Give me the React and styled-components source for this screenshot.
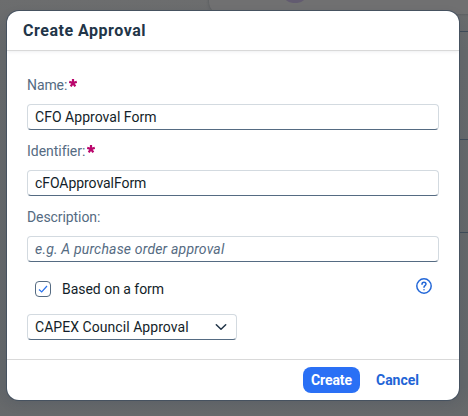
import React from "react";
import styled, { createGlobalStyle } from "styled-components";

const GlobalStyle = createGlobalStyle`
  *, *::before, *::after { box-sizing: border-box; }
  html, body { margin: 0; height: 100%; overflow: hidden; background: #66696b; }
  body, input, button { font-family: Roboto, "Noto Sans", sans-serif; }
`;

const Backdrop = styled.main`
  position: relative;
  width: 468px;
  height: 416px;
  padding: 11px 9px 16px 7px;
  background: linear-gradient(180deg, #6c6d6e 0, #66696b 50px, #63676a 385px, #67696b 416px);
  overflow: hidden;
`;

const PageCard = styled.div`
  position: absolute;
  left: 209px;
  top: -28px;
  width: 280px;
  height: 42px;
  border-radius: 12px;
  background: #707071;
  box-shadow: 0 0 3px #505458;
`;

const PageAvatar = styled.div`
  position: absolute;
  left: 283px;
  top: -24px;
  width: 24px;
  height: 27px;
  border-radius: 10px;
  background: #625b70;
`;

const PageRule = styled.div`
  position: absolute;
  right: 0;
  top: ${(p) => p.$top}px;
  width: 12px;
  height: 1px;
  background: #3f4b58;
`;

const Dialog = styled.section`
  position: relative;
  display: flex;
  flex-direction: column;
  width: 452px;
  height: 389px;
  border-radius: 12px;
  background: #fff;
  box-shadow: 0 0 0 1px #465260, 0 4px 12px rgba(34, 53, 72, 0.12);
  overflow: hidden;
`;

const Header = styled.header`
  flex: none;
  height: 40px;
  padding: 0 16px;
  border-bottom: 1px solid #d9d9d9;
  box-shadow: 0 1px 3px rgba(34, 53, 72, 0.08);
`;

const Title = styled.h1`
  margin: 0;
  font-size: 16px;
  line-height: 40px;
  font-weight: 700;
  letter-spacing: ${(p) => p.$track}px;
  color: #223548;
`;

const Body = styled.form`
  flex: 1;
  padding: 21px 20px 0;
`;

const Field = styled.div`
  height: 66px;
`;

const Label = styled.label`
  display: flex;
  height: 32px;
  font-size: 14px;
  line-height: 26px;
  letter-spacing: ${(p) => p.$track}px;
  color: #556b82;
`;

const Required = styled.svg`
  width: 8px;
  height: 8px;
  margin: 7px 0 0 1.5px;
  stroke: #ba066c;
  stroke-width: 2.2;
`;

const Input = styled.input`
  display: block;
  width: 412px;
  height: 26px;
  padding: 0 7px;
  border: 1px solid #d3dae0;
  border-bottom-color: #556b82;
  border-radius: 4px;
  outline: none;
  background: #fff;
  font-size: 14px;
  letter-spacing: ${(p) => p.$track}px;
  color: #131e29;
  &::placeholder {
    color: #556b82;
    font-style: italic;
    opacity: 1;
  }
`;

const OptionRow = styled.div`
  display: flex;
  height: 44px;
  padding: 11px 7px 0 8px;
`;

const Checkbox = styled.span`
  display: grid;
  place-items: center;
  width: 16px;
  height: 16px;
  border: 1px solid #556b82;
  border-radius: 4px;
`;

const CheckIcon = styled.svg`
  width: 14px;
  height: 14px;
  fill: none;
  stroke: #2b73ed;
  stroke-width: 1.2;
`;

const OptionText = styled.span`
  flex: 1;
  margin-left: 11px;
  font-size: 14px;
  line-height: 17px;
  letter-spacing: ${(p) => p.$track}px;
  color: #131e29;
`;

const HelpIcon = styled.svg`
  width: 16px;
  height: 16px;
  margin-top: -3px;
  fill: none;
  stroke: #2468d8;
  stroke-width: 1.5;
  stroke-linecap: round;
`;

const Select = styled.div`
  display: flex;
  align-items: center;
  justify-content: space-between;
  width: 210px;
  height: 26px;
  padding: 0 9px 0 7px;
  border: 1px solid #d3dae0;
  border-bottom-color: #556b82;
  border-radius: 4px;
  font-size: 14px;
  letter-spacing: ${(p) => p.$track}px;
  color: #131e29;
`;

const Chevron = styled.svg`
  width: 12px;
  height: 8px;
  fill: none;
  stroke: #223548;
  stroke-width: 1.5;
  stroke-linecap: round;
  stroke-linejoin: round;
`;

const Footer = styled.footer`
  flex: none;
  display: flex;
  justify-content: flex-end;
  gap: 8px;
  height: 41px;
  padding: 7px 32px 0 0;
  border-top: 1px solid #d9d9d9;
`;

const Button = styled.button`
  width: ${(p) => p.$width}px;
  height: 26px;
  padding: 0;
  border: 0;
  border-radius: 8px;
  background: ${(p) => (p.$primary ? "#2a70f5" : "transparent")};
  color: ${(p) => (p.$primary ? "#fff" : "#2264d6")};
  font-size: 14px;
  font-weight: 700;
  letter-spacing: ${(p) => p.$track}px;
`;

const fields = [
  { label: "Name:", required: true, value: "CFO Approval Form", track: 0.03, labelTrack: -0.1 },
  { label: "Identifier:", required: true, value: "cFOApprovalForm", track: -0.06, labelTrack: -0.03 },
  { label: "Description:", placeholder: "e.g. A purchase order approval", track: 0.18, labelTrack: -0.08 },
];

export default function App() {
  return (
    <>
      <GlobalStyle />
      <Backdrop>
        <PageCard />
        <PageAvatar />
        <PageRule $top={31} />
        <PageRule $top={139} />
        <PageRule $top={232} />
        <Dialog role="dialog" aria-labelledby="dialog-title">
          <Header>
            <Title id="dialog-title" $track={0.52}>Create Approval</Title>
          </Header>
          <Body>
            {fields.map((f) => (
              <Field key={f.label}>
                <Label htmlFor={f.label} $track={f.labelTrack}>
                  {f.label}
                  {f.required && (
                    <Required viewBox="0 0 8 8" aria-hidden="true">
                      <path d="M4 4V0M4 4L.2 2.8M4 4L7.8 2.8M4 4L1.7 7.3M4 4L6.3 7.3" />
                    </Required>
                  )}
                </Label>
                <Input id={f.label} defaultValue={f.value} placeholder={f.placeholder} $track={f.track} />
              </Field>
            ))}
            <OptionRow>
              <Checkbox role="checkbox" aria-checked="true" aria-label="Based on a form">
                <CheckIcon viewBox="0 0 14 14"><path d="M3 7.5L5.7 10L11 4" /></CheckIcon>
              </Checkbox>
              <OptionText $track={-0.03}>Based on a form</OptionText>
              <HelpIcon viewBox="0 0 16 16">
                <circle cx="8" cy="8" r="7.2" />
                <path d="M6 6.2C6 3.5 10 3.5 10 6.1C10 7.6 8 7.5 8 9.2M8 11.7V11.8" />
              </HelpIcon>
            </OptionRow>
            <Select $track={0.05}>
              CAPEX Council Approval
              <Chevron viewBox="0 0 12 8"><path d="M1.3 1.7L6 6.3L10.7 1.7" /></Chevron>
            </Select>
          </Body>
          <Footer>
            <Button $primary $width={57} $track={-0.1}>Create</Button>
            <Button $width={59} $track={0}>Cancel</Button>
          </Footer>
        </Dialog>
      </Backdrop>
    </>
  );
}
